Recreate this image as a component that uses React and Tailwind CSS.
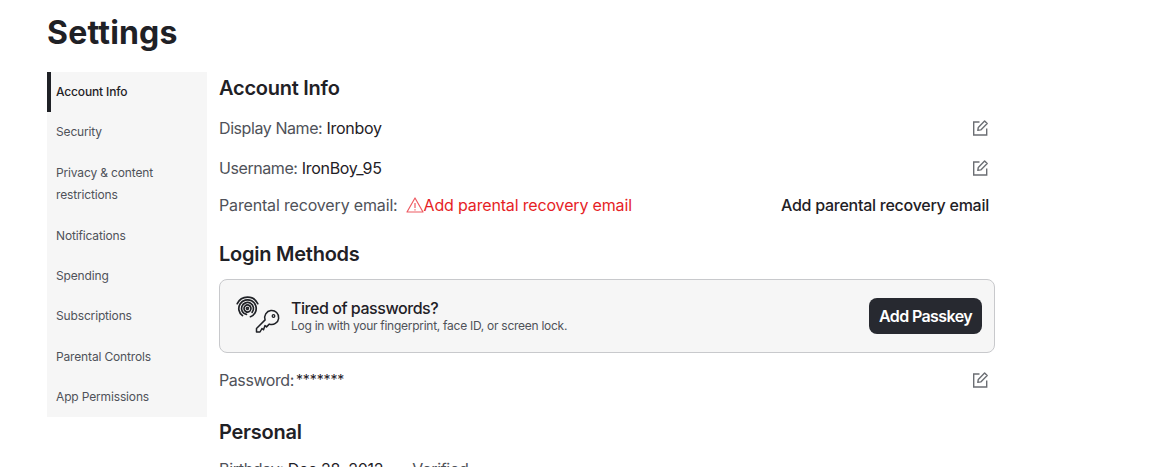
import React from "react";

const nav = ["Account Info", "Security", "Privacy & content restrictions", "Notifications", "Spending", "Subscriptions", "Parental Controls", "App Permissions"];

function arc(cx, cy, r, a0, a1) {
  const p = (a) => [cx + r * Math.cos((a * Math.PI) / 180), cy + r * Math.sin((a * Math.PI) / 180)];
  const [x0, y0] = p(a0);
  const [x1, y1] = p(a1);
  return `M${x0.toFixed(2)} ${y0.toFixed(2)}A${r} ${r} 0 ${a1 - a0 > 180 ? 1 : 0} 1 ${x1.toFixed(2)} ${y1.toFixed(2)}`;
}

function EditIcon() {
  return (
    <svg width="18" height="18" viewBox="0 0 18 18" fill="none" stroke="#6b6e73" strokeWidth="1.4" className="block">
      <path d="M8.5 3H2.7v13h13V9.5" />
      <path d="M6.8 11.4l.5-3L13.6 2l2.6 2.6-6.4 6.3z" strokeLinejoin="round" />
    </svg>
  );
}

function Row({ label, value, className = "" }) {
  return (
    <div className={"flex items-center justify-between pr-[6px] " + className}>
      <div className="text-[16px] leading-[24px] tracking-[-0.3px] text-[#4f5259]">
        <span className="tracking-[-0.42px]">{label}</span> <span className="text-[#1f2126]">{value}</span>
      </div>
      <EditIcon />
    </div>
  );
}

export default function App() {
  return (
    <div className="h-[467px] overflow-hidden bg-white pl-[47px] font-['Inter',sans-serif] text-[#1f2126]">
      <h1 className="pt-[13px] text-[32px] font-bold leading-[40px] tracking-[0.2px] text-[#1f2126]">Settings</h1>
      <div className="mt-[19px] flex">
        <nav className="h-[345px] w-[160px] shrink-0 bg-[#f6f6f6]">
          {nav.map((n, i) => (
            <div
              key={n}
              className={
                "flex items-center border-l-[4px] py-[9px] pl-[5px] pr-[30px] text-[12px] leading-[22.4px] tracking-[-0.15px] " +
                (i === 0 ? "border-[#1f2126] font-medium text-[#1f2126]" : "border-transparent text-[#4f5259]")
              }
            >
              {n}
            </div>
          ))}
        </nav>
        <main className="ml-[12px] w-[776px]">
          <h2 className="pt-[4px] text-[20px] font-semibold leading-[25px] tracking-[-0.25px]">Account Info</h2>
          <Row label="Display Name:" value="Ironboy" className="mt-[15px]" />
          <Row label="Username:" value="IronBoy_95" className="mt-[16px]" />
          <div className="mt-[13px] flex items-center justify-between pr-[6px] text-[16px] leading-[24px] tracking-[-0.16px]">
            <div className="flex items-center text-[#4f5259]">
              <span>Parental recovery email:</span>
              <svg width="18" height="18" viewBox="0 0 18 18" fill="none" stroke="#ee5a62" strokeWidth="1.2" className="ml-[8px]">
                <path d="M9 2L1 16h16z" strokeLinejoin="round" />
                <path d="M9 7v5M9 13.2v1.2" />
              </svg>
              <span className="text-[#e61e26]">Add parental recovery email</span>
            </div>
            <span className="font-medium tracking-[-0.26px] text-[#1f2126]">Add parental recovery email</span>
          </div>
          <h2 className="mt-[25px] text-[20px] font-semibold leading-[25px] tracking-[-0.25px]">Login Methods</h2>
          <div className="mt-[12px] flex h-[74px] items-center justify-between rounded-[8px] border border-[#c8c9cc] bg-[#f6f6f6] pl-[16px] pr-[12px]">
            <div className="flex items-center">
              <svg width="44" height="40" viewBox="0 0 44 40" fill="none" stroke="#1f2126" className="mr-[11px] shrink-0">
                <g strokeWidth="1.7" strokeLinecap="round">
                  <path d={arc(11.5, 12.5, 11.3, 205, 335)} />
                  <path d={arc(11.5, 12.5, 8.7, 125, 385)} />
                  <path d={arc(11.5, 12.5, 6, 100, 400)} />
                  <path d={arc(11.5, 12.5, 3.5, 60, 400)} />
                  <path d={arc(11.5, 12.5, 1, 60, 340)} />
                  <path d={arc(11.5, 12.5, 8.7, 30, 70)} />
                </g>
                <path strokeWidth="1.5" strokeLinejoin="round" d="M29.100 23.900A7 7 0 1 1 33.300 28.100L30.500 30.900 29 29.500 27.500 33.800 26 32.500 24 36H20.500V32.500z" />
                <circle cx="37.500" cy="20" r="1.300" strokeWidth="1.300" />
              </svg>
              <div>
                <div className="text-[16px] font-medium leading-[20px] tracking-[-0.45px]">Tired of passwords?</div>
                <div className="text-[12px] leading-[16px] tracking-[-0.27px] text-[#4f5259]">Log in with your fingerprint, face ID, or screen lock.</div>
              </div>
            </div>
            <button className="h-[36px] w-[113px] rounded-[8px] bg-[#272930] text-center text-[16px] font-semibold tracking-[-0.6px] text-white">Add Passkey</button>
          </div>
          <div className="mt-[15px] flex items-center justify-between pr-[6px]">
            <div className="flex items-center text-[16px] leading-[24px] tracking-[-0.42px] text-[#4f5259]">
              Password:
              <span className="ml-[2px] text-[14px] tracking-[-0.1px] text-[#1f2126]">*******</span>
            </div>
            <EditIcon />
          </div>
          <h2 className="mt-[28px] text-[20px] font-semibold leading-[25px] tracking-[-0.25px]">Personal</h2>
          <div className="mt-[12px] flex items-center text-[16px] leading-[24px] tracking-[-0.3px] text-[#4f5259]">
            <span>Birthday:</span>
            <span className="ml-[4px] text-[#1f2126]">Dec 28, 2012</span>
            <svg width="10" height="10" viewBox="0 0 10 10" className="ml-[16px] mr-[3px] mt-[6px]" fill="#1f2126">
              <circle cx="5" cy="5" r="5" />
            </svg>
            <span>Verified</span>
          </div>
        </main>
      </div>
    </div>
  );
}
